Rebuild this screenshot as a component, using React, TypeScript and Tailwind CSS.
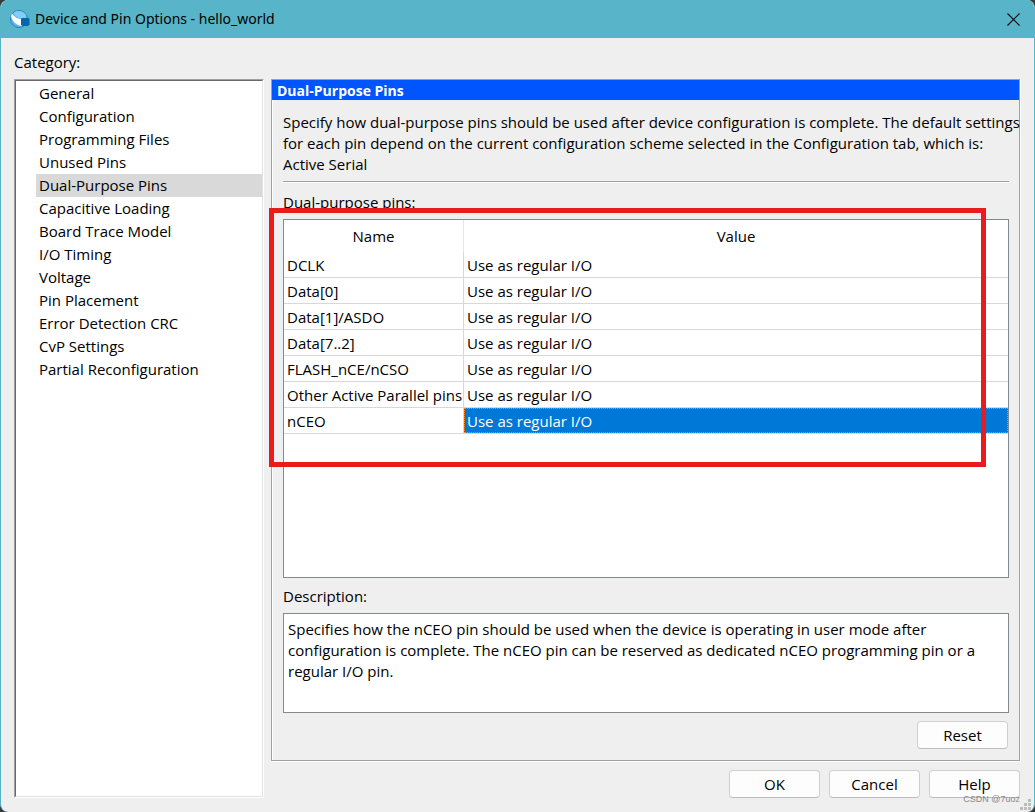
import React, { useState } from 'react';

const categories = [
  'General',
  'Configuration',
  'Programming Files',
  'Unused Pins',
  'Dual-Purpose Pins',
  'Capacitive Loading',
  'Board Trace Model',
  'I/O Timing',
  'Voltage',
  'Pin Placement',
  'Error Detection CRC',
  'CvP Settings',
  'Partial Reconfiguration',
];

const pins = [
  'DCLK',
  'Data[0]',
  'Data[1]/ASDO',
  'Data[7..2]',
  'FLASH_nCE/nCSO',
  'Other Active Parallel pins',
  'nCEO',
];

const description = [
  'Specifies how the nCEO pin should be used when the device is operating in user mode after',
  'configuration is complete. The nCEO pin can be reserved as dedicated nCEO programming pin or a',
  'regular I/O pin.',
].join('\n');

const AppIcon: React.FC = () => (
  <svg width="21" height="20" viewBox="0 0 21 20" aria-hidden="true">
    <circle cx="10" cy="10" r="8.5" fill="#62b5ea" stroke="#2384c4" />
    <path d="M4.500 4C8 1 14 1.500 17 6V9L12.500 9.500C9 9 6 7 4.500 4Z" fill="#86cdf5" />
    <path d="M3 4.500C5 8 9 10 13 10.500L12.500 17C7 16 3 12 2 7Z" fill="#fff" />
    <path d="M13 9h6.500l1 1v5.500L19 17h-5.500L12 15.500V10z" fill="#0468ab" />
  </svg>
);

const SizeGrip: React.FC = () => (
  <svg width="11" height="11" viewBox="0 0 11 11" fill="#bdbdbd" className="absolute right-[3px] bottom-[2px]" aria-hidden="true">
    <path d="M8 0h3v3H8zM4 4h3v3H4zM8 4h3v3H8zM0 8h3v3H0zM4 8h3v3H4zM8 8h3v3H8z" />
  </svg>
);

const DialogButton: React.FC<{ children: React.ReactNode }> = ({ children }) => (
  <button
    type="button"
    className="h-7 w-[91px] rounded border border-[#d0d0d0] border-b-[#bcbcbc] bg-[#fdfdfd] leading-5"
  >
    {children}
  </button>
);

const App: React.FC = () => {
  const [category, setCategory] = useState('Dual-Purpose Pins');
  const [selected, setSelected] = useState('nCEO');

  return (
    <div className="min-h-screen bg-[#3a3a3a] font-['Open_Sans','Noto_Sans',sans-serif] text-[15px] text-black">
      <div className="relative flex min-h-screen flex-col overflow-hidden rounded-lg border-x border-[#58b4c8] bg-[#efefef]">
        <header className="flex h-[38px] items-center justify-between bg-[#58b4c8] pr-[10px] pl-2">
          <div className="flex items-center gap-[5px]">
            <AppIcon />
            <h1 className="font-['Noto_Sans',sans-serif] text-sm">Device and Pin Options - hello_world</h1>
          </div>
          <button type="button" aria-label="Close" className="p-1">
            <svg width="13" height="13" viewBox="0 0 13 13" stroke="#111" strokeWidth="1.2" fill="none">
              <path d="M.5.5l12 12M12.500.5l-12 12" />
            </svg>
          </button>
        </header>

        <main className="flex flex-1 flex-col pt-[14px] pr-[14px] pb-[14px] pl-[13px]">
          <p className="mb-[6px] leading-[21px]">Category:</p>
          <div className="flex flex-1 gap-[7px]">
            <nav className="w-[250px] shrink-0 border border-t-[#a0a0a0] border-r-white border-b-white border-l-[#a0a0a0]">
              <ul className="h-full border border-t-[#696969] border-r-[#e3e3e3] border-b-[#e3e3e3] border-l-[#696969] bg-white pt-px pl-5">
                {categories.map((name) => (
                  <li key={name}>
                    <button
                      type="button"
                      onClick={() => setCategory(name)}
                      className={`block h-[23px] w-full pl-[3px] text-left leading-[23px] ${name === category ? 'bg-[#d9d9d9]' : ''}`}
                    >
                      {name}
                    </button>
                  </li>
                ))}
              </ul>
            </nav>

            <div className="flex min-w-0 flex-1 flex-col">
              <section className="flex flex-1 flex-col border border-[#a0a0a0] shadow-[1px_1px_0_#fff,inset_1px_0_0_#fff]">
                <h2 className="h-5 bg-[#0055ff] pl-[5px] text-sm leading-[21px] font-bold text-white">Dual-Purpose Pins</h2>
                <div className="flex flex-1 flex-col pt-3 pr-[10px] pb-[11px] pl-[11px]">
                  <p className="leading-[21px] whitespace-nowrap">
                    Specify how dual-purpose pins should be used after device configuration is complete. The default settings
                    <br />
                    for each pin depend on the current configuration scheme selected in the Configuration tab, which is:
                    <br />
                    Active Serial
                  </p>
                  <hr className="mt-[6px] mb-[10px] border-t border-[#a0a0a0] shadow-[0_1px_0_#fff]" />
                  <div className="relative flex flex-1 flex-col">
                    <h3 className="mb-[6px] leading-[21px]">Dual-purpose pins:</h3>
                    <div className="flex-1 border border-[#828790] bg-white">
                      <table className="w-full table-fixed border-separate border-spacing-0">
                        <thead>
                          <tr className="h-8">
                            <th className="w-[180px] border-r border-[#e5e5e5] font-normal">Name</th>
                            <th className="font-normal">Value</th>
                          </tr>
                        </thead>
                        <tbody>
                          {pins.map((pin) => (
                            <tr key={pin} className="h-[26px]" onClick={() => setSelected(pin)}>
                              <td className="border-r border-b border-[#d8d8d8] pl-[3px] leading-5 whitespace-nowrap">{pin}</td>
                              <td className="border-b border-[#d8d8d8] p-0 leading-5">
                                <div
                                  className={`flex h-[25px] items-center border pl-[2px] ${
                                    pin === selected
                                      ? 'border-dotted border-[#ff8728] bg-[#0078d7] text-white'
                                      : 'border-transparent'
                                  }`}
                                >
                                  Use as regular I/O
                                </div>
                              </td>
                            </tr>
                          ))}
                        </tbody>
                      </table>
                    </div>
                    <div className="pointer-events-none absolute top-4 right-[23px] -left-[14px] h-[259px] border-5 border-[#e81c1c]" />
                  </div>
                  <label htmlFor="description" className="mt-2 mb-[6px] leading-[21px]">
                    Description:
                  </label>
                  <textarea
                    id="description"
                    readOnly
                    className="h-[100px] w-full resize-none border border-[#828790] bg-white px-1 py-[5px] leading-[21px]"
                    value={description}
                  />
                  <div className="mt-2 flex justify-end pr-px">
                    <DialogButton>Reset</DialogButton>
                  </div>
                </div>
              </section>
              <footer className="mt-[9px] flex justify-end gap-[9px]">
                <DialogButton>OK</DialogButton>
                <DialogButton>Cancel</DialogButton>
                <DialogButton>Help</DialogButton>
              </footer>
            </div>
          </div>
        </main>

        <span className="pointer-events-none absolute right-[14px] bottom-[7px] font-['Liberation_Sans',sans-serif] text-[9px] leading-3 text-[#888]">
          CSDN @7uoz
        </span>
        <SizeGrip />
      </div>
    </div>
  );
};

export default App;
